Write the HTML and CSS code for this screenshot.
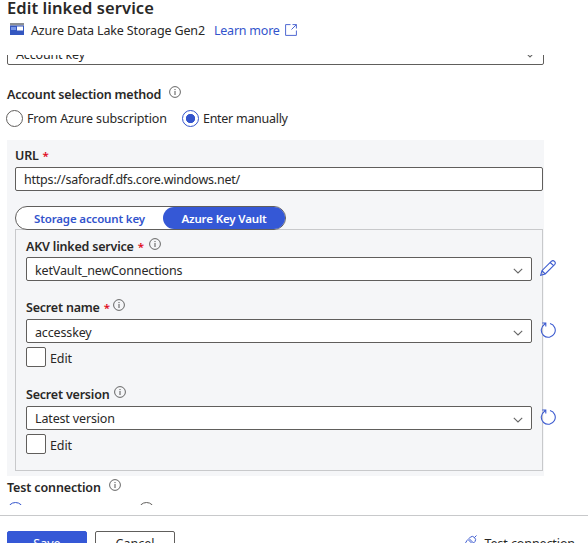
FILE: index.html
```html
<!DOCTYPE html>
<html lang="en">
<head>
<meta charset="utf-8">
<title>Edit linked service</title>
<link rel="stylesheet" href="styles.css">
</head>
<body>
<svg class="defs" width="0" height="0">
  <symbol id="info" viewBox="0 0 12 12"><circle cx="6" cy="6" r="5.4" fill="none" stroke="#555" stroke-width=".9"/><path d="M6 5v4M6 3v1.1" stroke="#555" fill="none"/></symbol>
  <symbol id="chev" viewBox="0 0 10 6"><path d="M.8.8 5 4.900 9.200.8" fill="none" stroke="#666" stroke-width="1.1"/></symbol>
  <symbol id="refresh" viewBox="0 0 16 16"><path d="M10 1.500A7 7 0 1 1 4.300 2.500M2.200 1H5.800V4.600M5.800 1 3.200 3.600" fill="none" stroke="#3c5bd0" stroke-width="1.100"/></symbol>
</svg>
<div class="app">
  <header class="header">
    <h1 class="title">Edit linked service</h1>
    <div class="subtitle">
      <svg class="storage" viewBox="0 0 14 12"><path fill="#8b8f94" d="M0 0h14v2.500H0z"/><path fill="#3457c0" d="M0 2.500h14V12H0z"/><path fill="#7896e6" d="M1 4h5v3H1z"/><path fill="#fff" d="M7 3.500h6v4H7z"/></svg>
      <span class="service">Azure Data Lake Storage Gen2</span>
      <a class="learn">Learn more</a>
      <svg class="external" viewBox="0 0 12 12"><path d="M5.500.6H.6v10.800H11.400V6.500M7.500.6h3.900v3.900M11.400.6 6.500 5.500" fill="none" stroke="#5069d2" stroke-width="1"/></svg>
    </div>
  </header>
  <main class="scroll">
    <div class="field auth"><span class="t-auth">Account key</span><svg class="chev"><use href="#chev"/></svg></div>
    <div class="label method"><span class="t-method">Account selection method</span><svg class="info"><use href="#info"/></svg></div>
    <div class="radios">
      <span class="radio"></span><span class="opt t-from">From Azure subscription</span>
      <span class="radio on"></span><span class="opt t-enter">Enter manually</span>
    </div>
    <section class="panel">
      <div class="label url"><span>URL</span><b class="req">*</b></div>
      <div class="field address"><span class="t-url">https://saforadf.dfs.core.windows.net/</span></div>
      <div class="toggle"><span class="tab"><span class="t-sak">Storage account key</span></span><span class="tab active"><span class="t-akv">Azure Key Vault</span></span></div>
      <div class="vault">
        <div class="label"><span class="t-ls">AKV linked service</span><b class="req">*</b><svg class="info"><use href="#info"/></svg></div>
        <div class="row"><div class="field low"><span class="t-ket">ketVault_newConnections</span><svg class="chev"><use href="#chev"/></svg></div>
          <svg class="action pencil" viewBox="0 0 16 16"><path d="M.7 15.300 1.900 10.700 11.500 1.200Q13 0 14.500 1.300 16 2.900 14.800 4.400L5.200 14 .7 15.300ZM1.900 10.700 5.200 14M10.200 2.500 13.500 5.700" fill="none" stroke="#3c5bd0" stroke-width="1.100"/></svg></div>
        <div class="label second"><span class="t-sn">Secret name</span><b class="req">*</b><svg class="info"><use href="#info"/></svg></div>
        <div class="row"><div class="field low"><span class="t-acc">accesskey</span><svg class="chev"><use href="#chev"/></svg></div><svg class="action"><use href="#refresh"/></svg></div>
        <div class="check"><span class="box"></span><span class="t-edit">Edit</span></div>
        <div class="label third"><span class="t-sv">Secret version</span><svg class="info"><use href="#info"/></svg></div>
        <div class="row"><div class="field"><span class="t-lat">Latest version</span><svg class="chev"><use href="#chev"/></svg></div><svg class="action"><use href="#refresh"/></svg></div>
        <div class="check"><span class="box"></span><span class="t-edit">Edit</span></div>
      </div>
    </section>
    <div class="label test"><span class="t-test">Test connection</span><svg class="info"><use href="#info"/></svg></div>
    <div class="radios targets"><span class="radio on"></span><span class="radio"></span></div>
  </main>
  <footer class="footer">
    <button class="btn primary">Save</button>
    <button class="btn">Cancel</button>
    <span class="tester"><svg class="plug" viewBox="0 0 14 14"><path d="M1 13 3.500 10.500M3.500 10.500Q1.500 7.500 4 5.500L5 4.500 9.500 9 8.500 10Q6 12.500 3.500 10.500ZM6 3.500 7.500 2Q9.500.5 11.500 2.500 13.500 4.500 12 6.500L10.500 8ZM11.500 2.500 13.500.5" fill="none" stroke="#3c5bd0" stroke-width="1"/></svg><span class="t-foot">Test connection</span></span>
  </footer>
</div>
</body>
</html>
```
FILE: styles.css
```css
* { box-sizing: border-box; }
body { margin: 0; background: #fff; color: #292827; font: 12.5px/20px "Noto Sans", "Open Sans", sans-serif; letter-spacing: -.15px; }
.defs { position: absolute; }
.app { height: 543px; overflow: hidden; display: flex; flex-direction: column; white-space: nowrap; }
.app svg { flex: none; }
.header { height: 55px; flex: none; padding-left: 7px; }
.title { margin: -4px 0 0; font-size: 16.5px; line-height: 24px; font-weight: 600; letter-spacing: .07px; }
.subtitle { display: flex; align-items: center; height: 20px; }
.service, .learn { padding-top: 2px; }
.storage { width: 14px; height: 12px; margin: -2px 7px 0 3px; }
.learn { color: #3354cc; margin-left: 9px; letter-spacing: -.22px; }
.external { width: 12px; height: 12px; margin: -1px 0 0 5px; }
.scroll { height: 450px; flex: none; overflow: hidden; padding-left: 7px; }
.field { height: 24px; display: flex; align-items: center; justify-content: space-between; background: #fff; border: 1px solid #605e5c; border-radius: 2px; padding: 1px 8px 0; }
.field .chev { width: 10px; height: 6px; margin: 3px 0 0; }
.low > span { padding-top: 2px; }
.auth { width: 537px; margin-top: -14px; }
.auth > span { padding-top: 2px; }
.label { display: flex; align-items: center; height: 20px; font-weight: 600; letter-spacing: -.2px; }
.info { width: 12px; height: 12px; margin: -5px 0 0 5px; }
.req { color: #e00b1c; margin-left: 4px; font-weight: 600; font-size: 11.5px; }
.method { margin-top: 19px; }
.method > span, .third > span { padding-top: 2px; }
.method .info, .test .info { margin-left: 8px; }
.test .info { margin-top: -7px; }
.second .info { margin: -7px 0 0 3px; }
.radios { display: flex; align-items: center; height: 20px; margin: 4px 0 0 -1px; }
.radio { width: 17px; height: 17px; flex: none; border: 1px solid #605e5c; border-radius: 50%; background: #fff; }
.radio.on { border-color: #3354cc; background: radial-gradient(circle, #3354cc 0 4.300px, #fff 5px); }
.opt { margin-left: 4px; padding-top: 1px; }
.t-from { width: 155px; }
.t-enter { letter-spacing: -.28px; }
.t-url { letter-spacing: -.21px; }
.panel { width: 537px; height: 336px; margin-top: 12px; padding: 5px 1px 0 8px; background: #f5f6f8; }
.url { height: 22px; }
.toggle { display: flex; width: 271px; height: 24px; margin-top: 15px; border: 1px solid #605e5c; border-radius: 12px; background: #fff; color: #3354cc; font-size: 11.5px; font-weight: 600; position: relative; }
.tab { width: 147px; display: flex; align-items: center; justify-content: center; padding-top: 1px; }
.tab.active { flex: 1; background: #3558d6; color: #fff; border-radius: 12px; }
.vault { height: 242px; margin-top: -1px; border: 1px solid #c8c9cb; padding: 6px 10px 0; }
.row { display: flex; align-items: center; }
.row .field { width: 506px; flex: none; }
.action { width: 16px; height: 16px; margin: -3px 0 0 8px; }
.second { margin-top: 17px; margin-bottom: 1px; }
.vault > .label:first-child { height: 21px; }
.check { display: flex; height: 20px; align-items: center; margin-top: 4px; }
.t-edit { padding-top: 3px; letter-spacing: -.1px; }
.box { width: 20px; height: 20px; background: #fff; border: 1px solid #605e5c; border-radius: 2px; margin-right: 4px; }
.third { margin-top: 17px; margin-bottom: 2px; }
.test { margin-top: 2px; }
.t-test { letter-spacing: -.14px; }
.targets { margin: 2px 0 0; }
.targets .radio + .radio { margin-left: 114px; }
.footer { height: 28px; margin-top: 10px; border-top: 1px solid #c8c9cb; padding: 15px 13px 0 7px; display: flex; align-items: flex-start; }
.btn { width: 80px; height: 24px; flex: none; padding: 0; margin-right: 8px; font: inherit; line-height: 24px; color: inherit; background: #fff; border: 1px solid #605e5c; border-radius: 2px; }
.primary { color: #fff; background: #3558d6; border-color: #3558d6; }
.tester { display: flex; margin-left: auto; line-height: 25px; letter-spacing: -.1px; }
.plug { width: 14px; height: 14px; margin: 4px 8px 0 0; }
```
